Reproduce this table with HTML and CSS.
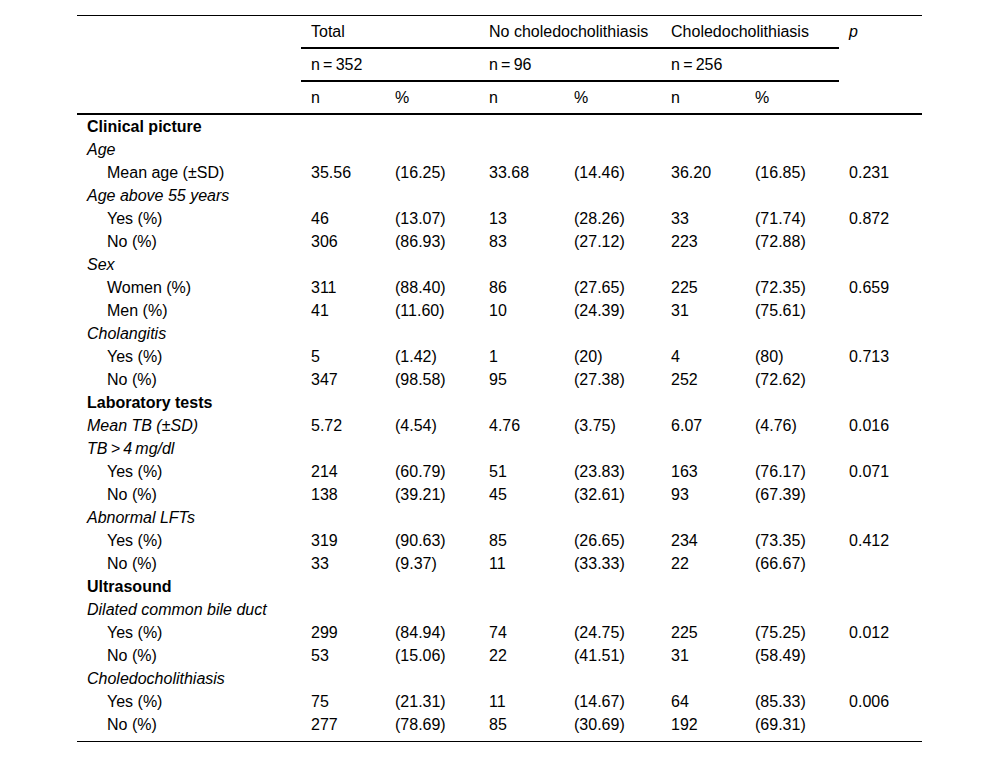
FILE: index.html
```html
<!DOCTYPE html>
<html>
<head>
<meta charset="utf-8">
<link rel="stylesheet" href="styles.css">
</head>
<body>
<table class="tbl">
<colgroup>
<col class="c-label"><col class="c-n1"><col class="c-p1"><col class="c-n2"><col class="c-p2"><col class="c-n3"><col class="c-p3"><col class="c-pv">
</colgroup>
<thead>
<tr class="h1">
<th rowspan="3" class="span3"></th>
<th colspan="2" class="ul">Total</th>
<th colspan="2" class="ul">No choledocholithiasis</th>
<th colspan="2" class="ul">Choledocholithiasis</th>
<th rowspan="3" class="span3 it">p</th>
</tr>
<tr class="h2">
<th colspan="2" class="ul">n&#8201;=&#8201;352</th>
<th colspan="2" class="ul">n&#8201;=&#8201;96</th>
<th colspan="2" class="ul">n&#8201;=&#8201;256</th>
</tr>
<tr class="h3">
<th class="ul">n</th><th class="ul">%</th>
<th class="ul">n</th><th class="ul">%</th>
<th class="ul">n</th><th class="ul">%</th>
</tr>
</thead>
<tbody>
<tr><td class="b">Clinical picture</td><td></td><td></td><td></td><td></td><td></td><td></td><td></td></tr>
<tr><td class="it">Age</td><td></td><td></td><td></td><td></td><td></td><td></td><td></td></tr>
<tr><td class="ind">Mean age (±SD)</td><td>35.56</td><td>(16.25)</td><td>33.68</td><td>(14.46)</td><td>36.20</td><td>(16.85)</td><td>0.231</td></tr>
<tr><td class="it">Age above 55 years</td><td></td><td></td><td></td><td></td><td></td><td></td><td></td></tr>
<tr><td class="ind">Yes (%)</td><td>46</td><td>(13.07)</td><td>13</td><td>(28.26)</td><td>33</td><td>(71.74)</td><td>0.872</td></tr>
<tr><td class="ind">No (%)</td><td>306</td><td>(86.93)</td><td>83</td><td>(27.12)</td><td>223</td><td>(72.88)</td><td></td></tr>
<tr><td class="it">Sex</td><td></td><td></td><td></td><td></td><td></td><td></td><td></td></tr>
<tr><td class="ind">Women (%)</td><td>311</td><td>(88.40)</td><td>86</td><td>(27.65)</td><td>225</td><td>(72.35)</td><td>0.659</td></tr>
<tr><td class="ind">Men (%)</td><td>41</td><td>(11.60)</td><td>10</td><td>(24.39)</td><td>31</td><td>(75.61)</td><td></td></tr>
<tr><td class="it">Cholangitis</td><td></td><td></td><td></td><td></td><td></td><td></td><td></td></tr>
<tr><td class="ind">Yes (%)</td><td>5</td><td>(1.42)</td><td>1</td><td>(20)</td><td>4</td><td>(80)</td><td>0.713</td></tr>
<tr><td class="ind">No (%)</td><td>347</td><td>(98.58)</td><td>95</td><td>(27.38)</td><td>252</td><td>(72.62)</td><td></td></tr>
<tr><td class="b">Laboratory tests</td><td></td><td></td><td></td><td></td><td></td><td></td><td></td></tr>
<tr><td class="it">Mean TB (±SD)</td><td>5.72</td><td>(4.54)</td><td>4.76</td><td>(3.75)</td><td>6.07</td><td>(4.76)</td><td>0.016</td></tr>
<tr><td class="it">TB&#8201;&gt;&#8201;4&#8201;mg/dl</td><td></td><td></td><td></td><td></td><td></td><td></td><td></td></tr>
<tr><td class="ind">Yes (%)</td><td>214</td><td>(60.79)</td><td>51</td><td>(23.83)</td><td>163</td><td>(76.17)</td><td>0.071</td></tr>
<tr><td class="ind">No (%)</td><td>138</td><td>(39.21)</td><td>45</td><td>(32.61)</td><td>93</td><td>(67.39)</td><td></td></tr>
<tr><td class="it">Abnormal LFTs</td><td></td><td></td><td></td><td></td><td></td><td></td><td></td></tr>
<tr><td class="ind">Yes (%)</td><td>319</td><td>(90.63)</td><td>85</td><td>(26.65)</td><td>234</td><td>(73.35)</td><td>0.412</td></tr>
<tr><td class="ind">No (%)</td><td>33</td><td>(9.37)</td><td>11</td><td>(33.33)</td><td>22</td><td>(66.67)</td><td></td></tr>
<tr><td class="b">Ultrasound</td><td></td><td></td><td></td><td></td><td></td><td></td><td></td></tr>
<tr><td class="it">Dilated common bile duct</td><td></td><td></td><td></td><td></td><td></td><td></td><td></td></tr>
<tr><td class="ind">Yes (%)</td><td>299</td><td>(84.94)</td><td>74</td><td>(24.75)</td><td>225</td><td>(75.25)</td><td>0.012</td></tr>
<tr><td class="ind">No (%)</td><td>53</td><td>(15.06)</td><td>22</td><td>(41.51)</td><td>31</td><td>(58.49)</td><td></td></tr>
<tr><td class="it">Choledocholithiasis</td><td></td><td></td><td></td><td></td><td></td><td></td><td></td></tr>
<tr><td class="ind">Yes (%)</td><td>75</td><td>(21.31)</td><td>11</td><td>(14.67)</td><td>64</td><td>(85.33)</td><td>0.006</td></tr>
<tr class="last"><td class="ind">No (%)</td><td>277</td><td>(78.69)</td><td>85</td><td>(30.69)</td><td>192</td><td>(69.31)</td><td></td></tr>
</tbody>
</table>
</body>
</html>
```

FILE: styles.css
```css
html, body {
  margin: 0;
  padding: 0;
  background: #fff;
}
body {
  font-family: "Liberation Sans", Arial, sans-serif;
  font-size: 16px;
  color: #000;
}
.tbl {
  margin: 15px 0 0 77px;
  width: 845px;
  table-layout: fixed;
  border-collapse: separate;
  border-spacing: 0;
}
.c-label { width: 224px; }
.c-n1 { width: 84px; }
.c-p1 { width: 94px; }
.c-n2 { width: 85px; }
.c-p2 { width: 97px; }
.c-n3 { width: 84px; }
.c-p3 { width: 94px; }
.c-pv { width: 83px; }
th, td {
  text-align: left;
  font-weight: normal;
  padding: 0 0 0 10px;
  line-height: 23px;
  height: 23px;
  white-space: nowrap;
  vertical-align: top;
}
thead th {
  padding-top: 4px;
  padding-bottom: 4px;
}
.h1 th {
  border-top: 1px solid #000;
}
.ul {
  border-bottom: 2px solid #000;
}
.span3 {
  border-bottom: 2px solid #000;
}
.b { font-weight: bold; }
.it { font-style: italic; }
.ind { padding-left: 30px; }
.last td {
  padding-bottom: 5px;
  border-bottom: 1px solid #000;
}
```
